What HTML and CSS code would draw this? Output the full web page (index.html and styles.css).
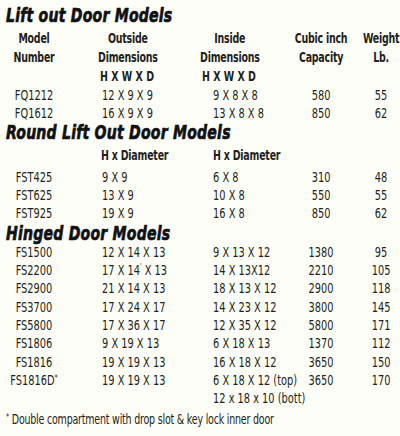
FILE: index.html
```html
<!DOCTYPE html>
<html lang="en">
<head>
    <meta charset="UTF-8">
    <meta name="viewport" content="width=device-width, initial-scale=1.0">
    <title>Door Models</title>
    <link rel="stylesheet" href="styles.css">
</head>
<body>
  <div class="page">
    <div class="sheet">
        <h2 class="section first">Lift out Door Models</h2>
        <div class="row head">
            <div class="model">Model<br>Number</div>
            <div class="dims out"><span>Outside<br>Dimensions</span><div class="hxw">H X W X D</div></div>
            <div class="dims in"><span>Inside<br>Dimensions</span><div class="hxw">H X W X D</div></div>
            <div class="num">Cubic inch<br>Capacity</div>
            <div class="wt">Weight<br>Lb.</div>
        </div>
        <div class="rows">
            <div class="row"><div class="model">FQ1212</div><div>12 X 9 X 9</div><div>9 X 8 X 8</div><div class="num">580</div><div class="wt">55</div></div>
            <div class="row"><div class="model">FQ1612</div><div>16 X 9 X 9</div><div>13 X 8 X 8</div><div class="num">850</div><div class="wt">62</div></div>
        </div>

        <h2 class="section">Round Lift Out Door Models</h2>
        <div class="row head diam">
            <div></div>
            <div>H x Diameter</div>
            <div>H x Diameter</div>
        </div>
        <div class="rows round">
            <div class="row"><div class="model">FST425</div><div>9 X 9</div><div>6 X 8</div><div class="num">310</div><div class="wt">48</div></div>
            <div class="row"><div class="model">FST625</div><div>13 X 9</div><div>10 X 8</div><div class="num">550</div><div class="wt">55</div></div>
            <div class="row"><div class="model">FST925</div><div>19 X 9</div><div>16 X 8</div><div class="num">850</div><div class="wt">62</div></div>
        </div>

        <h2 class="section">Hinged Door Models</h2>
        <div class="rows">
            <div class="row"><div class="model">FS1500</div><div>12 X 14 X 13</div><div>9 X 13 X 12</div><div class="num">1380</div><div class="wt">95</div></div>
            <div class="row"><div class="model">FS2200</div><div>17 X 14<sup class="tick">'</sup> X 13</div><div>14 X 13X12</div><div class="num">2210</div><div class="wt">105</div></div>
            <div class="row"><div class="model">FS2900</div><div>21 X 14 X 13</div><div>18 X 13 X 12</div><div class="num">2900</div><div class="wt">118</div></div>
            <div class="row"><div class="model">FS3700</div><div>17 X 24 X 17</div><div>14 X 23 X 12</div><div class="num">3800</div><div class="wt">145</div></div>
            <div class="row"><div class="model">FS5800</div><div>17 X 36 X 17</div><div>12 X 35 X 12</div><div class="num">5800</div><div class="wt">171</div></div>
            <div class="row"><div class="model">FS1806</div><div>9 X 19 X 13</div><div>6 X 18 X 13</div><div class="num">1370</div><div class="wt">112</div></div>
            <div class="row"><div class="model">FS1816</div><div>19 X 19 X 13</div><div>16 X 18 X 12</div><div class="num">3650</div><div class="wt">150</div></div>
            <div class="row"><div class="model">FS1816D<sup class="star">*</sup></div><div>19 X 19 X 13</div><div>6 X 18 X 12 (top)</div><div class="num">3650</div><div class="wt">170</div></div>
            <div class="row"><div class="model"></div><div></div><div>12 x 18 x 10 (bott)</div><div class="num"></div><div class="wt"></div></div>
        </div>

        <p class="note"><sup class="star">*</sup> Double compartment with drop slot &amp; key lock inner door</p>
    </div>
  </div>
</body>
</html>
```

FILE: styles.css
```css
body {
    margin: 0;
    background-color: #fefef9;
    color: #231f20;
    font-family: "DejaVu Sans Condensed", "DejaVu Sans", sans-serif;
    font-size: 14px;
}
.page {
    width: 400px;
    height: 436px;
    overflow: hidden;
}
/* the sheet is laid out wide, then squeezed to look like a condensed face */
.sheet {
    width: 513px;
    padding-top: 5px;
    transform: scaleX(0.78);
    transform-origin: 0 0;
}
.section {
    margin: 0;
    padding-left: 7.7px;
    font-size: 20px;
    line-height: 20px;
    font-weight: bold;
    font-style: italic;
    letter-spacing: 0.3px;
    color: #111;
    -webkit-text-stroke: 0.7px #111;
}
.row {
    display: grid;
    grid-template-columns: 130.8px 142.3px 102.6px 71.8px 1fr;
    white-space: nowrap;
}
.rows .row {
    line-height: 18.3px;
}
.model {
    padding-right: 43.6px;
    text-align: center;
}
.num {
    text-align: center;
}
.wt {
    padding-left: 16.7px;
    text-align: center;
}
.head {
    margin-top: 3.5px;
    line-height: 19px;
    font-size: 13.5px;
    font-weight: bold;
    letter-spacing: -0.3px;
}
.dims {
    display: flex;
    flex-direction: column;
    align-items: flex-start;
}
.dims span {
    text-align: center;
}
.dims.out {
    margin-left: -5.1px;
}
.dims.in {
    margin-left: -16.7px;
}
.hxw {
    padding-left: 2.5px;
    letter-spacing: 0;
}
.diam div:nth-child(2) {
    margin-left: -1.3px;
}
.round {
    margin-top: 3.3px;
}
.tick {
    font-size: 8px;
    vertical-align: 5px;
    line-height: 0;
}
.star {
    font-size: 9px;
    vertical-align: 4px;
    line-height: 0;
}
.note {
    margin: 2.3px 0 0;
    padding-left: 7.7px;
    line-height: 18.3px;
    font-size: 13.5px;
    letter-spacing: -0.25px;
}
```
